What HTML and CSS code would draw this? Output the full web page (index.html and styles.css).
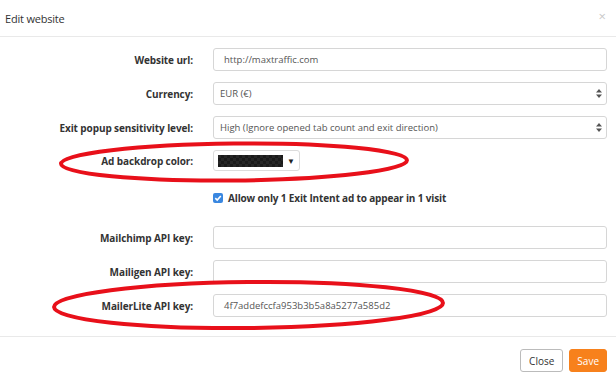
FILE: index.html
```html
<!DOCTYPE html>
<html lang="en">
<head>
    <meta charset="UTF-8">
    <title>Edit website</title>
    <link rel="stylesheet" href="styles.css">
</head>
<body>
    <div class="modal">
        <header class="modal-header">
            <h4>Edit website</h4>
            <span class="close">&times;</span>
        </header>

        <form class="modal-body">
            <div class="row">
                <label>Website url:</label>
                <div class="control">http://maxtraffic.com</div>
            </div>
            <div class="row">
                <label>Currency:</label>
                <div class="control select">
                    <span>EUR (&euro;)</span>
                    <svg width="6" height="9" viewBox="0 0 6 9"><path d="M3 0 L6 3.5 H0 Z M3 9 L6 5.5 H0 Z" fill="#555"/></svg>
                </div>
            </div>
            <div class="row">
                <label>Exit popup sensitivity level:</label>
                <div class="control select">
                    <span>High (Ignore opened tab count and exit direction)</span>
                    <svg width="6" height="9" viewBox="0 0 6 9"><path d="M3 0 L6 3.5 H0 Z M3 9 L6 5.5 H0 Z" fill="#555"/></svg>
                </div>
            </div>
            <div class="row row-picker">
                <label>Ad backdrop color:</label>
                <div class="picker">
                    <span class="swatch"></span>
                    <span class="caret">&#9660;</span>
                </div>
            </div>
            <div class="row row-check">
                <span></span>
                <div class="check">
                    <svg width="10" height="10" viewBox="0 0 10 10"><rect width="10" height="10" rx="2" fill="#3a87e0"/><path d="M2.3 5.2 L4.2 7 L7.8 3" stroke="#fff" stroke-width="1.6" fill="none"/></svg>
                    <span>Allow only 1 Exit Intent ad to appear in 1 visit</span>
                </div>
            </div>
            <div class="row">
                <label>Mailchimp API key:</label>
                <div class="control"></div>
            </div>
            <div class="row">
                <label>Mailigen API key:</label>
                <div class="control"></div>
            </div>
            <div class="row">
                <label>MailerLite API key:</label>
                <div class="control">4f7addefccfa953b3b5a8a5277a585d2</div>
            </div>
        </form>

        <footer class="modal-footer">
            <button type="button" class="btn btn-close">Close</button>
            <button type="button" class="btn btn-save">Save</button>
        </footer>
    </div>

    <svg class="marks" width="616" height="379">
        <ellipse cx="234" cy="162" rx="173" ry="18.5" transform="rotate(-0.6 234 162)"/>
        <ellipse cx="248.5" cy="305" rx="194.5" ry="23" transform="rotate(-0.6 248 305)"/>
    </svg>
</body>
</html>
```

FILE: styles.css
```css
body {
    font-family: "Open Sans", sans-serif;
    margin: 0;
    padding: 0;
    background-color: #fff;
    color: #333;
}

.modal {
    width: 616px;
    height: 379px;
}

.modal-header {
    height: 36px;
    border-bottom: 1px solid #e9e9e9;
    display: flex;
    align-items: center;
    justify-content: space-between;
    padding: 0 10px 0 5px;
}

.modal-header h4 {
    margin: 0;
    font-size: 11px;
    letter-spacing: -0.2px;
    font-weight: normal;
    color: #333;
}

.close {
    color: #c8c8c8;
    font-size: 13px;
    margin-top: -4px;
}

.modal-body {
    padding-top: 11px;
    height: 288px;
    border-bottom: 1px solid #e9e9e9;
}

.row {
    display: grid;
    grid-template-columns: 193px 394px;
    column-gap: 20px;
    align-items: center;
    margin-bottom: 11px;
    height: 23px;
}

.row label {
    text-align: right;
    font-size: 10px;
    letter-spacing: -0.1px;
    font-weight: bold;
    color: #333;
}

.control {
    box-sizing: border-box;
    height: 23px;
    border: 1px solid #d6d6d6;
    border-radius: 3px;
    padding: 0 10px;
    font-size: 9.5px;
    line-height: 21px;
    color: #555;
}

.select {
    display: flex;
    justify-content: space-between;
    align-items: center;
    padding: 0 4px 0 6px;
}

.row-picker {
    height: 21px;
    margin-bottom: 17px;
}

.picker {
    box-sizing: border-box;
    width: 87px;
    height: 21px;
    border: 1px solid #dcdcdc;
    border-radius: 3px;
    display: flex;
    align-items: center;
    padding: 0 4px;
    gap: 4px;
}

.swatch {
    width: 68px;
    height: 12px;
    background-color: #262626;
    background-image:
        linear-gradient(45deg, #1a1a1a 25%, transparent 25%, transparent 75%, #1a1a1a 75%),
        linear-gradient(45deg, #1a1a1a 25%, transparent 25%, transparent 75%, #1a1a1a 75%);
    background-size: 6px 6px;
    background-position: 0 0, 3px 3px;
}

.caret {
    font-size: 8px;
    color: #222;
}

.row-check {
    height: 20px;
    margin-bottom: 18px;
}

.check {
    display: flex;
    align-items: center;
    gap: 5px;
    font-size: 10px;
    letter-spacing: -0.15px;
    font-weight: bold;
    color: #333;
}

.modal-footer {
    display: flex;
    justify-content: flex-end;
    gap: 6px;
    padding: 12px 9px 0 0;
}

.btn {
    font-family: "Open Sans", sans-serif;
    height: 23px;
    padding: 0 7px;
    font-size: 10px;
    border: 1px solid #bbb;
    border-radius: 3px;
    background-color: #fff;
    color: #333;
}

.btn-close {
    padding: 0 8px;
}

.btn-save {
    background-color: #f7811c;
    border-color: #f7811c;
    color: #fff;
}

.marks {
    position: absolute;
    left: 0;
    top: 0;
    pointer-events: none;
}

.marks ellipse {
    fill: none;
    stroke: #e8101a;
    stroke-width: 4;
}
```
